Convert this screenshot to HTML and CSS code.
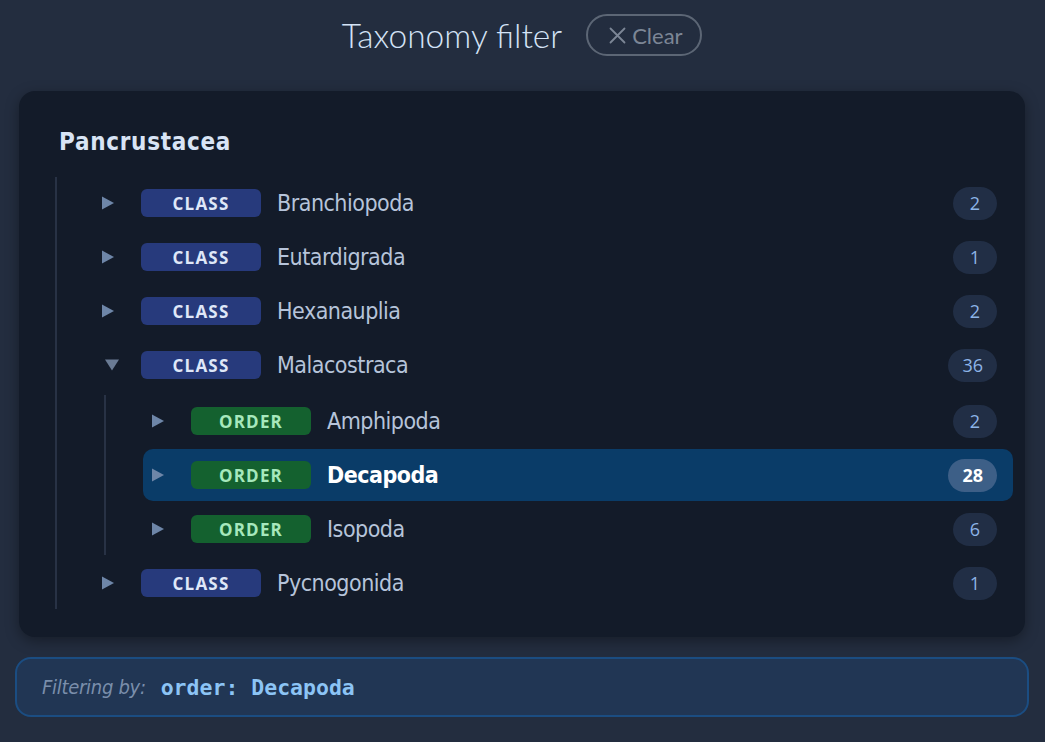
FILE: index.html
```html
<!DOCTYPE html>
<html lang="en">
<head>
<meta charset="utf-8">
<title>Taxonomy filter</title>
<link rel="stylesheet" href="styles.css">
</head>
<body>
<div class="page">
  <header class="header">
    <h1 class="title">Taxonomy filter</h1>
    <button class="clear-btn" type="button">
      <svg class="clear-icon" width="17" height="17" viewBox="0 0 17 17" aria-hidden="true"><path d="M1.5 1.5 L15.5 15.5 M15.5 1.5 L1.5 15.5" stroke="currentColor" stroke-width="1.8" fill="none" stroke-linecap="round"/></svg>
      <span>Clear</span>
    </button>
  </header>

  <section class="card">
    <h2 class="root-name">Pancrustacea</h2>
    <ul class="tree">
      <li class="node">
        <div class="row">
          <span class="toggle"><svg width="18" height="14" viewBox="0 0 18 14"><path d="M0 0.5 L12 7 L0 13.5 Z"/></svg></span>
          <span class="badge badge-class">CLASS</span>
          <span class="name">Branchiopoda</span>
          <span class="count">2</span>
        </div>
      </li>
      <li class="node">
        <div class="row">
          <span class="toggle"><svg width="18" height="14" viewBox="0 0 18 14"><path d="M0 0.5 L12 7 L0 13.5 Z"/></svg></span>
          <span class="badge badge-class">CLASS</span>
          <span class="name">Eutardigrada</span>
          <span class="count">1</span>
        </div>
      </li>
      <li class="node">
        <div class="row">
          <span class="toggle"><svg width="18" height="14" viewBox="0 0 18 14"><path d="M0 0.5 L12 7 L0 13.5 Z"/></svg></span>
          <span class="badge badge-class">CLASS</span>
          <span class="name">Hexanauplia</span>
          <span class="count">2</span>
        </div>
      </li>
      <li class="node">
        <div class="row">
          <span class="toggle toggle-open"><svg width="18" height="14" viewBox="0 0 18 14"><path d="M3 1.5 L17 1.5 L10 12.5 Z"/></svg></span>
          <span class="badge badge-class">CLASS</span>
          <span class="name">Malacostraca</span>
          <span class="count">36</span>
        </div>
        <ul class="tree subtree">
          <li class="node">
            <div class="row">
              <span class="toggle"><svg width="18" height="14" viewBox="0 0 18 14"><path d="M0 0.5 L12 7 L0 13.5 Z"/></svg></span>
              <span class="badge badge-order">ORDER</span>
              <span class="name">Amphipoda</span>
              <span class="count">2</span>
            </div>
          </li>
          <li class="node">
            <div class="row row-selected">
              <span class="toggle"><svg width="18" height="14" viewBox="0 0 18 14"><path d="M0 0.5 L12 7 L0 13.5 Z"/></svg></span>
              <span class="badge badge-order">ORDER</span>
              <span class="name">Decapoda</span>
              <span class="count">28</span>
            </div>
          </li>
          <li class="node">
            <div class="row">
              <span class="toggle"><svg width="18" height="14" viewBox="0 0 18 14"><path d="M0 0.5 L12 7 L0 13.5 Z"/></svg></span>
              <span class="badge badge-order">ORDER</span>
              <span class="name">Isopoda</span>
              <span class="count">6</span>
            </div>
          </li>
        </ul>
      </li>
      <li class="node">
        <div class="row">
          <span class="toggle"><svg width="18" height="14" viewBox="0 0 18 14"><path d="M0 0.5 L12 7 L0 13.5 Z"/></svg></span>
          <span class="badge badge-class">CLASS</span>
          <span class="name">Pycnogonida</span>
          <span class="count">1</span>
        </div>
      </li>
    </ul>
  </section>

  <footer class="filter-bar">
    <span class="filter-label">Filtering by:</span>
    <code class="filter-value">order: Decapoda</code>
  </footer>
</div>
</body>
</html>
```

FILE: styles.css
```css
* {
  box-sizing: border-box;
}

html, body {
  margin: 0;
  padding: 0;
  background: #232d3f;
  height: 100%;
}

body {
  font-family: "DejaVu Sans", "Liberation Sans", sans-serif;
  font-stretch: condensed;
  color: #b6c4da;
}

.page {
  padding: 14px 16px 0 15px;
}

.header {
  display: flex;
  align-items: center;
  justify-content: center;
  gap: 24px;
  height: 42px;
  margin-bottom: 35px;
}

.title {
  margin: 0;
  font-family: Lato, "Open Sans", sans-serif;
  font-stretch: normal;
  font-weight: 300;
  font-size: 33.5px;
  color: #d4e3f6;
  line-height: 42px;
}

.clear-btn {
  display: flex;
  align-items: center;
  gap: 6px;
  height: 42px;
  width: 116px;
  padding: 0 0 0 21px;
  border: 2px solid #5c6675;
  border-radius: 21px;
  background: transparent;
  color: #7c8696;
  font-family: Lato, "Open Sans", sans-serif;
  font-stretch: normal;
  font-size: 22px;
  font-weight: 400;
}

.clear-icon {
  display: block;
}

.card {
  margin: 0 4px;
  background: #131b29;
  border-radius: 16px;
  padding: 36px 12px 28px 36px;
  box-shadow: 0 4px 14px rgba(0, 0, 0, 0.35);
}

.root-name {
  margin: 0 0 20px 4px;
  font-size: 24px;
  line-height: 30px;
  font-weight: 700;
  letter-spacing: 0.7px;
  color: #d8e4f5;
}

.tree {
  list-style: none;
  margin: 0;
  padding: 0 0 0 36px;
  border-left: 2px solid #283245;
  display: flex;
  flex-direction: column;
  gap: 2px;
}

.node {
  display: flex;
  flex-direction: column;
  gap: 2px;
}

.subtree {
  margin: 2px 0 0 11px;
  padding-left: 37px;
}

.row {
  display: flex;
  align-items: center;
  height: 52px;
  padding: 0 16px 0 9px;
  border-radius: 10px;
}

.row-selected {
  background: #0a3c68;
}

.toggle {
  width: 18px;
  height: 14px;
  margin-right: 21px;
  display: flex;
}

.toggle svg {
  fill: #6e86a8;
}

.toggle-open svg {
  fill: #6a7b94;
}

.badge {
  width: 120px;
  height: 28px;
  border-radius: 6px;
  display: flex;
  align-items: center;
  justify-content: center;
  font-family: "Open Sans", "Noto Sans", sans-serif;
  font-stretch: normal;
  font-weight: 700;
  font-size: 17px;
  letter-spacing: 1.2px;
  margin-right: 16px;
}

.badge-class {
  background: #273a7c;
  color: #dfe7f8;
}

.badge-order {
  background: #14612f;
  color: #a6e8bc;
}

.name {
  flex: 1;
  font-size: 23px;
  letter-spacing: -0.5px;
  color: #b6c4da;
}

.row-selected .name {
  color: #ffffff;
  font-weight: 700;
}

.count {
  min-width: 44px;
  height: 33px;
  padding: 0 14px;
  border-radius: 17px;
  background: #212e45;
  color: #8db4e8;
  font-family: "Open Sans", "Noto Sans", sans-serif;
  font-stretch: normal;
  font-size: 18px;
  display: flex;
  align-items: center;
  justify-content: center;
}

.row-selected .count {
  background: #3d5f87;
  color: #ffffff;
  font-weight: 700;
}

.filter-bar {
  margin-top: 20px;
  height: 60px;
  border: 2px solid #1b4d82;
  border-radius: 16px;
  background: #213654;
  display: flex;
  align-items: center;
  padding-left: 25px;
  gap: 15px;
}

.filter-label {
  font-style: italic;
  font-size: 20px;
  letter-spacing: -0.3px;
  color: #7a8eab;
}

.filter-value {
  font-family: "DejaVu Sans Mono", "Liberation Mono", monospace;
  font-stretch: normal;
  font-weight: 700;
  font-size: 21.5px;
  color: #8cc4f5;
}
```
